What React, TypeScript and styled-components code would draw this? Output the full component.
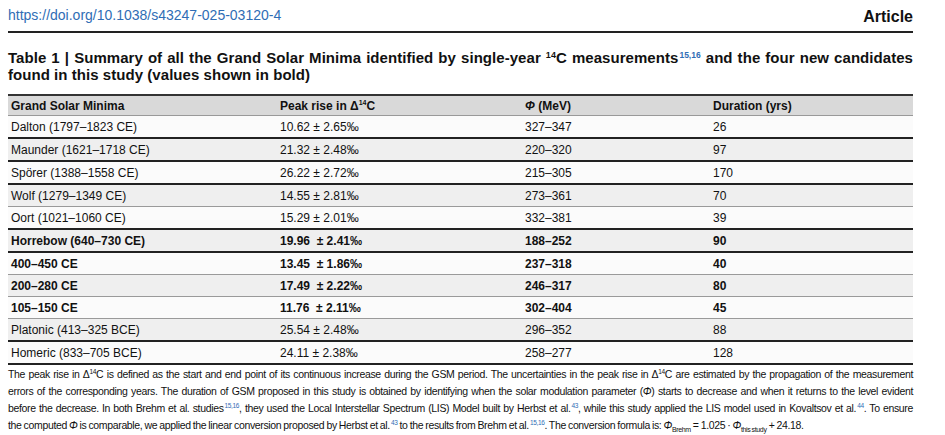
import * as React from 'react';
import styled, { createGlobalStyle } from 'styled-components';

interface Row {
    name: string;
    peak: string;
    phi: string;
    duration: string;
    bold?: boolean;
    rule: 'thick' | 'thin';
}

const rows: Row[] = [
    { name: 'Dalton (1797–1823 CE)', peak: '10.62 ± 2.65‰', phi: '327–347', duration: '26', rule: 'thick' },
    { name: 'Maunder (1621–1718 CE)', peak: '21.32 ± 2.48‰', phi: '220–320', duration: '97', rule: 'thick' },
    { name: 'Spörer (1388–1558 CE)', peak: '26.22 ± 2.72‰', phi: '215–305', duration: '170', rule: 'thick' },
    { name: 'Wolf (1279–1349 CE)', peak: '14.55 ± 2.81‰', phi: '273–361', duration: '70', rule: 'thin' },
    { name: 'Oort (1021–1060 CE)', peak: '15.29 ± 2.01‰', phi: '332–381', duration: '39', rule: 'thick' },
    { name: 'Horrebow (640–730 CE)', peak: '19.96  ± 2.41‰', phi: '188–252', duration: '90', bold: true, rule: 'thick' },
    { name: '400–450 CE', peak: '13.45  ± 1.86‰', phi: '237–318', duration: '40', bold: true, rule: 'thin' },
    { name: '200–280 CE', peak: '17.49  ± 2.22‰', phi: '246–317', duration: '80', bold: true, rule: 'thin' },
    { name: '105–150 CE', peak: '11.76  ± 2.11‰', phi: '302–404', duration: '45', bold: true, rule: 'thin' },
    { name: 'Platonic (413–325 BCE)', peak: '25.54 ± 2.48‰', phi: '296–352', duration: '88', rule: 'thick' },
    { name: 'Homeric (833–705 BCE)', peak: '24.11 ± 2.38‰', phi: '258–277', duration: '128', rule: 'thick' },
];

const App = () => {
    return <Page>
        <GlobalStyle />
        <TopBar>
            <DoiLink>https://doi.org/10.1038/s43247-025-03120-4</DoiLink>
            <Kind>Article</Kind>
        </TopBar>

        <Caption>
            <Line>Table 1 | Summary of all the Grand Solar Minima identified by single-year <sup>14</sup>C measurements<Ref>15,16</Ref> and the four new candidates</Line>
            <Line $last>found in this study (values shown in bold)</Line>
        </Caption>

        <Table>
            <colgroup>
                <col style={{ width: 269 }} />
                <col style={{ width: 245 }} />
                <col style={{ width: 188 }} />
                <col />
            </colgroup>
            <thead>
                <HeadRow>
                    <HeadCell>Grand Solar Minima</HeadCell>
                    <HeadCell>Peak rise in Δ<sup>14</sup>C</HeadCell>
                    <HeadCell><i>Φ</i> (MeV)</HeadCell>
                    <HeadCell>Duration (yrs)</HeadCell>
                </HeadRow>
            </thead>
            <tbody>
                {rows.map((r, i) => <BodyRow key={r.name} $striped={i % 2 === 1} $rule={r.rule} $bold={!!r.bold}>
                    <Cell>{r.name}</Cell>
                    <Cell>{r.peak}</Cell>
                    <Cell>{r.phi}</Cell>
                    <Cell>{r.duration}</Cell>
                </BodyRow>)}
            </tbody>
        </Table>

        <Footnote>
            <Line>The peak rise in Δ<sup>14</sup>C is defined as the start and end point of its continuous increase during the GSM period. The uncertainties in the peak rise in Δ<sup>14</sup>C are estimated by the propagation of the measurement</Line>
            <Line>errors of the corresponding years. The duration of GSM proposed in this study is obtained by identifying when the solar modulation parameter (<i>Φ</i>) starts to decrease and when it returns to the level evident</Line>
            <Line>before the decrease. In both Brehm et al. studies<Ref>15,16</Ref>, they used the Local Interstellar Spectrum (LIS) Model built by Herbst et al.<Ref>43</Ref>, while this study applied the LIS model used in Kovaltsov et al.<Ref>44</Ref>. To ensure</Line>
            <Line $last>the computed <i>Φ</i> is comparable, we applied the linear conversion proposed by Herbst et al.<Ref>43</Ref> to the results from Brehm et al.<Ref>15,16</Ref>. The conversion formula is: <i>Φ</i><sub>Brehm</sub> = 1.025 · <i>Φ</i><sub>this study</sub> + 24.18.</Line>
        </Footnote>
    </Page>
}

const GlobalStyle = createGlobalStyle`
body {
margin: 0;
background: #fff;
font-family: "Liberation Sans", Arial, sans-serif;
color: #111;
}
`

const Page = styled.div`
width: 905px;
padding: 0 32px 0 8px;
`

const TopBar = styled.div`
display: flex;
justify-content: space-between;
align-items: flex-end;
border-bottom: 2px solid #222;
padding-bottom: 5px;
box-sizing: border-box;
height: 33px;
`

const DoiLink = styled.div`
color: #2f6db5;
font-size: 14px;
padding-bottom: 3px;
`

const Kind = styled.div`
font-weight: bold;
font-size: 16px;
`

const Line = styled.div<{ $last?: boolean }>`
text-align: ${p => p.$last ? 'left' : 'justify'};
text-align-last: ${p => p.$last ? 'left' : 'justify'};
white-space: nowrap;
`

const Ref = styled.sup`
color: #2f6db5;
font-size: 8px;
font-weight: normal;
margin-left: 1px;
`

const Caption = styled.div`
font-weight: bold;
font-size: 15px;
letter-spacing: 0.05px;
line-height: 17px;
margin-top: 16px;

sup {
font-size: 9px;
vertical-align: 5px;
line-height: 0;
}
${Ref} {
font-size: 8.5px;
font-weight: bold;
letter-spacing: 0;
}
`

const Table = styled.table`
width: 100%;
table-layout: fixed;
border-collapse: collapse;
margin-top: 11px;
font-size: 12px;
border-top: 2px solid #333;

sup {
font-size: 7px;
vertical-align: 5px;
line-height: 0;
}
`

const HeadRow = styled.tr`
background: #d9d9d9;
border-bottom: 1px solid #999;
`

const HeadCell = styled.th`
text-align: left;
font-weight: bold;
padding: 0 3px;
height: 19px;
`

const BodyRow = styled.tr<{ $striped: boolean; $rule: 'thick' | 'thin'; $bold: boolean }>`
background: ${p => p.$striped ? '#efefef' : '#fbfbfb'};
border-bottom: ${p => p.$rule === 'thick' ? '2px solid #222' : '1px solid #9a9a9a'};
font-weight: ${p => p.$bold ? 'bold' : 'normal'};
white-space: pre;
`

const Cell = styled.td`
padding: 0 3px;
height: 21px;
`

const Footnote = styled.div`
font-size: 10.5px;
line-height: 17px;
letter-spacing: -0.35px;
word-spacing: -0.5px;
margin-top: 1px;

sup {
font-size: 6.5px;
vertical-align: 4px;
line-height: 0;
}
sub {
font-size: 7px;
line-height: 0;
}
${Ref} {
font-size: 6.5px;
}
`

export default App;
